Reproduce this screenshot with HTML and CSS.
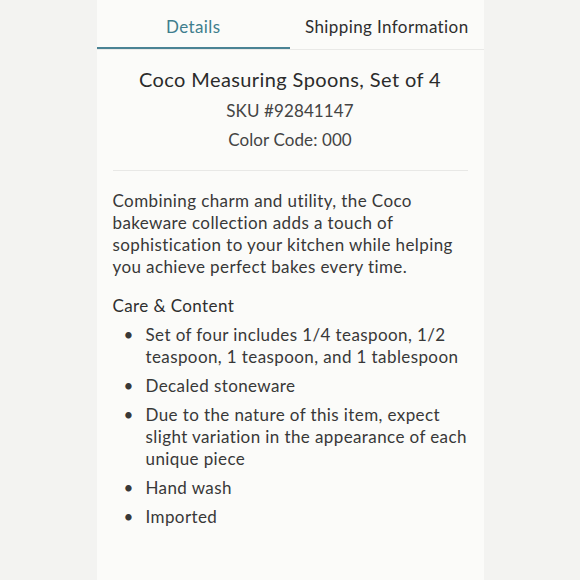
FILE: index.html
```html
<!DOCTYPE html>
<html lang="en">
<head>
    <meta charset="UTF-8">
    <meta name="viewport" content="width=device-width, initial-scale=1.0">
    <title>Coco Measuring Spoons</title>
    <link rel="stylesheet" href="styles.css">
</head>
<body>

    <!-- Product info panel -->
    <div class="panel">
        <div class="tabs">
            <div class="tab active">Details</div>
            <div class="tab">Shipping Information</div>
        </div>

        <div class="content">
            <div class="heading">
                <h1>Coco Measuring Spoons, Set of 4</h1>
                <div class="meta">SKU #92841147</div>
                <div class="meta">Color Code: 000</div>
            </div>

            <p class="desc">Combining charm and utility, the Coco bakeware collection adds a touch of sophistication to your kitchen while helping you achieve perfect bakes every time.</p>

            <h3>Care &amp; Content</h3>
            <ul class="care">
                <li>Set of four includes 1/4 teaspoon, 1/2 teaspoon, 1 teaspoon, and 1 tablespoon</li>
                <li>Decaled stoneware</li>
                <li>Due to the nature of this item, expect slight variation in the appearance of each unique piece</li>
                <li>Hand wash</li>
                <li>Imported</li>
            </ul>
        </div>
    </div>

</body>
</html>
```

FILE: styles.css
```css
body {
    margin: 0;
    background-color: #f3f3f1;
    font-family: Lato, "Noto Sans", sans-serif;
    color: #383838;
    letter-spacing: 0.4px;
}
.panel {
    background: #fbfbf9;
    width: 387px;
    min-height: 580px;
    margin: 0 auto;
}
.tabs {
    display: flex;
    height: 50px;
    border-bottom: 1px solid #e9e9e7;
    box-sizing: border-box;
}
.tab {
    flex: 1;
    text-align: center;
    font-size: 17px;
    padding-top: 16px;
    box-sizing: border-box;
    color: #2e2e2e;
}
.tab.active {
    color: #3f7e8d;
    border-bottom: 2px solid #4a8394;
}
.content {
    padding: 0 16px;
}
.heading {
    text-align: center;
    padding: 17px 0 16px;
    border-bottom: 1px solid #e8e8e6;
}
h1 {
    font-size: 20px;
    line-height: 24px;
    font-weight: normal;
    margin: 0 0 5px;
    color: #2b2b2b;
}
.meta {
    font-size: 17px;
    color: #444;
    line-height: 29px;
    letter-spacing: 0.1px;
}
.desc {
    font-size: 17px;
    line-height: 22px;
    margin: 19px 0 17px;
}
h3 {
    font-size: 17px;
    line-height: 22px;
    font-weight: normal;
    margin: 0 0 7px;
    color: #2e2e2e;
}
.care {
    list-style: none;
    margin: 0;
    padding-left: 11px;
    font-size: 17px;
    line-height: 22px;
}
.care li {
    display: flex;
    margin-bottom: 7px;
}
.care li::before {
    content: "\2022";
    flex: none;
    width: 22px;
}
```
